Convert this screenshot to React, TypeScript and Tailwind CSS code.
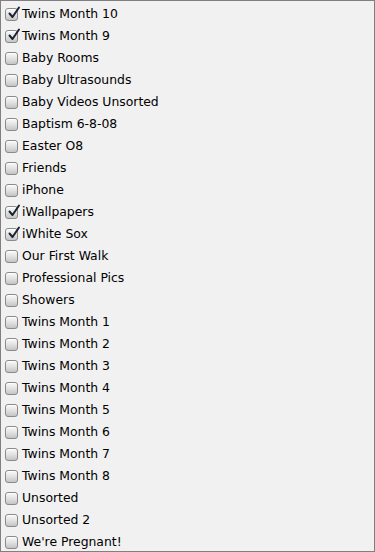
const items: [string, boolean][] = [
  ['Twins Month 10', true],
  ['Twins Month 9', true],
  ['Baby Rooms', false],
  ['Baby Ultrasounds', false],
  ['Baby Videos Unsorted', false],
  ['Baptism 6-8-08', false],
  ['Easter O8', false],
  ['Friends', false],
  ['iPhone', false],
  ['iWallpapers', true],
  ['iWhite Sox', true],
  ['Our First Walk', false],
  ['Professional Pics', false],
  ['Showers', false],
  ['Twins Month 1', false],
  ['Twins Month 2', false],
  ['Twins Month 3', false],
  ['Twins Month 4', false],
  ['Twins Month 5', false],
  ['Twins Month 6', false],
  ['Twins Month 7', false],
  ['Twins Month 8', false],
  ['Unsorted', false],
  ['Unsorted 2', false],
  ["We're Pregnant!", false],
];

function Box({ checked }: { checked: boolean }) {
  return (
    <span className="relative w-[13px] h-[13px] shrink-0 rounded-[3px] border border-[#8a8a8a] bg-gradient-to-b from-[#fafafa] via-[#e2e2e2] to-[#c4c4c4] shadow-[inset_0_1px_0_#fff]">
      {checked && (
        <svg className="absolute left-[1px] top-[-3px]" width="14" height="14" viewBox="0 0 14 14">
          <path d="M2.5 7.5 L5.5 11 L12 1.5" fill="none" stroke="#1a2233" strokeWidth="2" strokeLinecap="round" strokeLinejoin="round" />
        </svg>
      )}
    </span>
  );
}

export default function App() {
  return (
    <div
      className="w-[375px] h-[552px] bg-[#f1f1f1] border border-[#808080] pt-[2px] overflow-hidden"
      style={{ fontFamily: '"DejaVu Sans", sans-serif' }}
    >
      {items.map(([label, checked]) => (
        <div key={label} className="h-[22px] flex items-center pl-[4px] gap-[4px] text-[12.4px] text-black">
          <Box checked={checked} />
          <span>{label}</span>
        </div>
      ))}
    </div>
  );
}
